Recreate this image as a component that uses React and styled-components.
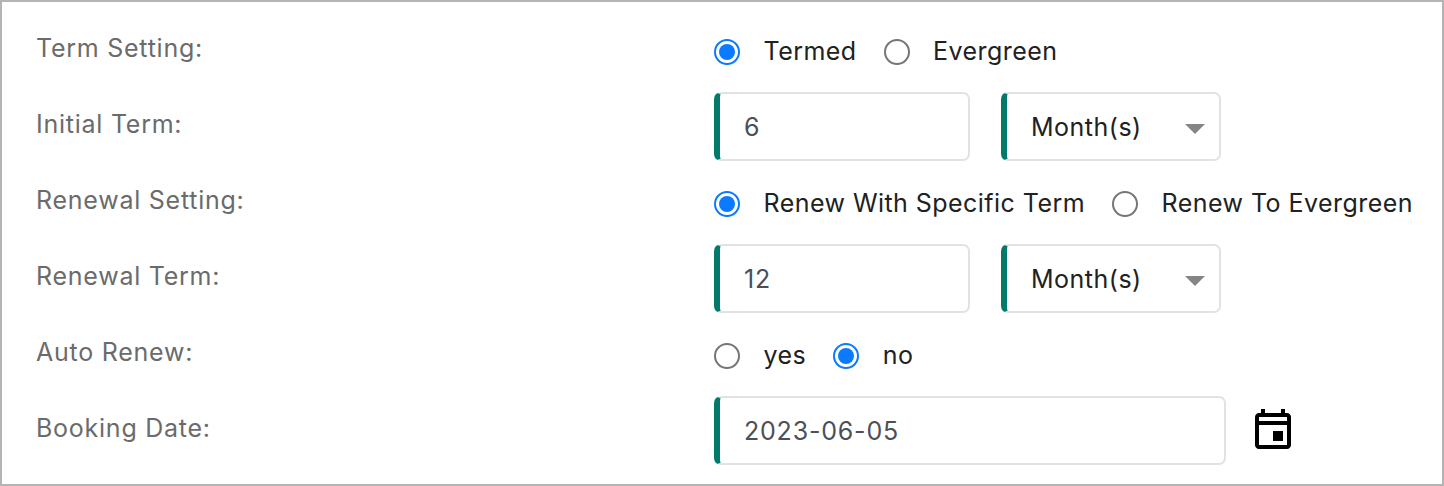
import React from 'react';
import styled, { createGlobalStyle } from 'styled-components';

const Global = createGlobalStyle`
   html, body { margin: 0; padding: 0; background: #fff; }
   body { font-family: Inter, "Liberation Sans", sans-serif; }
`;

const Frame = styled.div`
   box-sizing: border-box;
   width: 1444px;
   height: 486px;
   border: 2px solid #b4b4b4;
   padding: 12px 0 0 34px;
   background: #fff;
`;

const Row = styled.div`
   display: grid;
   grid-template-columns: 678px 1fr;
   align-items: center;
   height: 76px;
`;

const Label = styled.div`
   font-size: 25px;
   line-height: 32px;
   letter-spacing: 0.75px;
   color: #6b6b6b;
   padding-bottom: 8px;
`;

const Options = styled.div`
   display: flex;
   align-items: center;
   gap: 27px;
`;

const Option = styled.div`
   display: flex;
   align-items: center;
   gap: 23.5px;
   font-size: 25px;
   letter-spacing: 0.45px;
   color: #212121;
`;

const OptionText = styled.span`
   line-height: 32px;
   padding-bottom: 2px;
`;

const Radio = styled.span`
   box-sizing: border-box;
   display: flex;
   align-items: center;
   justify-content: center;
   width: 26px;
   height: 26px;
   border-radius: 50%;
   border: 2px solid ${(p) => (p.$on ? '#0a7aff' : '#767676')};
   &::after {
      content: '';
      display: ${(p) => (p.$on ? 'block' : 'none')};
      width: 16px;
      height: 16px;
      border-radius: 50%;
      background: #0a7aff;
   }
`;

const Controls = styled.div`
   display: flex;
   align-items: center;
   padding-bottom: 4px;
`;

const Field = styled.div`
   box-sizing: border-box;
   display: flex;
   align-items: center;
   justify-content: space-between;
   width: ${(p) => p.$width}px;
   height: 69px;
   margin-right: ${(p) => p.$gap || 0}px;
   padding: 2px 14px 0 24px;
   background: #fff;
   border: 2px solid #e2e2e2;
   border-left: 6px solid #017a6b;
   border-radius: 7px;
   font-size: 25px;
   letter-spacing: ${(p) => (p.$select ? '0.5px' : '0.8px')};
   color: ${(p) => (p.$select ? '#212121' : '#4b5058')};
`;

const Caret = styled.span`
   width: 0;
   height: 0;
   margin-top: 4px;
   border-left: 10px solid transparent;
   border-right: 10px solid transparent;
   border-top: 10px solid #858585;
`;

const CalendarIcon = styled.svg`
   display: block;
   width: 48px;
   height: 48px;
   margin-left: 23px;
   margin-bottom: 2px;
`;

function Choice({ on, children }) {
   return (
      <Option>
         <Radio $on={on} />
         <OptionText>{children}</OptionText>
      </Option>
   );
}

function Unit() {
   return (
      <Field $width={220} $select>
         Month(s)
         <Caret />
      </Field>
   );
}

export default function App() {
   return (
      <Frame>
         <Global />
         <Row>
            <Label>Term Setting:</Label>
            <Options>
               <Choice on>Termed</Choice>
               <Choice>Evergreen</Choice>
            </Options>
         </Row>
         <Row>
            <Label>Initial Term:</Label>
            <Controls>
               <Field $width={256} $gap={31}>6</Field>
               <Unit />
            </Controls>
         </Row>
         <Row>
            <Label>Renewal Setting:</Label>
            <Options>
               <Choice on>Renew With Specific Term</Choice>
               <Choice>Renew To Evergreen</Choice>
            </Options>
         </Row>
         <Row>
            <Label>Renewal Term:</Label>
            <Controls>
               <Field $width={256} $gap={31}>12</Field>
               <Unit />
            </Controls>
         </Row>
         <Row>
            <Label>Auto Renew:</Label>
            <Options>
               <Choice>yes</Choice>
               <Choice on>no</Choice>
            </Options>
         </Row>
         <Row>
            <Label>Booking Date:</Label>
            <Controls>
               <Field $width={512}>2023-06-05</Field>
               <CalendarIcon viewBox="0 0 24 24" fill="#000">
                  <path d="M19 4h-1V2h-2v2H8V2H6v2H5c-1.11 0-1.99.9-1.99 2L3 20c0 1.1.89 2 2 2h14c1.1 0 2-.9 2-2V6c0-1.1-.9-2-2-2zm0 16H5V10h14v10zm0-12H5V6h14v2zm-2 5h-5v5h5v-5z" />
               </CalendarIcon>
            </Controls>
         </Row>
      </Frame>
   );
}
